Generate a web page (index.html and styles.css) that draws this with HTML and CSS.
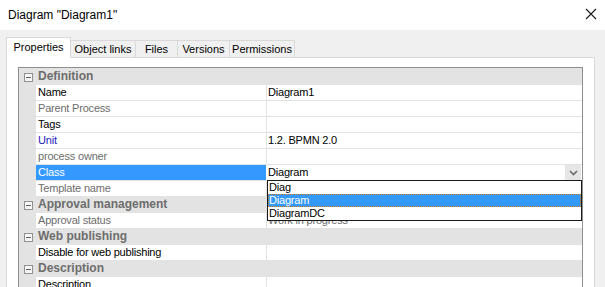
FILE: index.html
```html
<!DOCTYPE html>
<html>
<head>
<meta charset="utf-8">
<title>Diagram</title>
<link rel="stylesheet" href="styles.css">
</head>
<body>
<div class="titlebar">
  <span class="title">Diagram "Diagram1"</span>
  <svg class="close" width="12" height="12" viewBox="0 0 12 12"><path d="M1 1 L11 11 M11 1 L1 11" stroke="#1a1a1a" stroke-width="1.1" fill="none"/></svg>
</div>
<div class="dialog">
  <div class="tabs">
    <div class="tab active w-props">Properties</div>
    <div class="tab w-links">Object links</div>
    <div class="tab w-files">Files</div>
    <div class="tab w-versions">Versions</div>
    <div class="tab w-perms">Permissions</div>
  </div>
  <div class="panel">
    <div class="grid">
      <div class="row cat"><span class="gut"><span class="toggle"></span></span><span class="cat-label">Definition</span></div>
      <div class="row"><span class="gut"></span><span class="name">Name</span><span class="val">Diagram1</span></div>
      <div class="row"><span class="gut"></span><span class="name muted">Parent Process</span><span class="val"></span></div>
      <div class="row"><span class="gut"></span><span class="name">Tags</span><span class="val"></span></div>
      <div class="row"><span class="gut"></span><span class="name link">Unit</span><span class="val">1.2. BPMN 2.0</span></div>
      <div class="row"><span class="gut"></span><span class="name muted">process owner</span><span class="val"></span></div>
      <div class="row"><span class="gut"></span><span class="name selected">Class</span>
        <span class="val combo"><span class="combo-text">Diagram</span><span class="combo-btn"><svg width="9" height="6" viewBox="0 0 9 6"><path d="M1 1 L4.5 4.5 L8 1" stroke="#6a6a6a" stroke-width="1.6" fill="none"/></svg></span>
          <span class="dropdown">
            <span class="opt">Diag</span>
            <span class="opt hl">Diagram</span>
            <span class="opt">DiagramDC</span>
          </span>
        </span>
      </div>
      <div class="row"><span class="gut"></span><span class="name muted">Template name</span><span class="val"></span></div>
      <div class="row cat"><span class="gut"><span class="toggle"></span></span><span class="cat-label">Approval management</span></div>
      <div class="row"><span class="gut"></span><span class="name muted">Approval status</span><span class="val muted">Work in progress</span></div>
      <div class="row cat"><span class="gut"><span class="toggle"></span></span><span class="cat-label">Web publishing</span></div>
      <div class="row"><span class="gut"></span><span class="name">Disable for web publishing</span><span class="val"></span></div>
      <div class="row cat"><span class="gut"><span class="toggle"></span></span><span class="cat-label">Description</span></div>
      <div class="row"><span class="gut"></span><span class="name">Description</span><span class="val"></span></div>
    </div>
  </div>
</div>
</body>
</html>
```

FILE: styles.css
```css
* { box-sizing: border-box; }
html, body { margin: 0; padding: 0; }
body {
  width: 605px;
  height: 287px;
  overflow: hidden;
  background: #f0f0f0;
  font-family: "Liberation Sans", Arial, sans-serif;
  font-size: 11px;
  color: #000;
}
.titlebar {
  height: 30px;
  background: #fff;
  display: flex;
  align-items: center;
  justify-content: space-between;
  padding: 0 8px;
  font-size: 12px;
  line-height: 30px;
}
.close { display: block; margin-top: -2px; }
.dialog { padding: 7px 10px 0 6px; }
.tabs {
  display: flex;
  align-items: flex-end;
  height: 20px;
}
.tab {
  height: 17px;
  border: 1px solid #d9d9d9;
  border-bottom: none;
  margin-right: -1px;
  background: #f0f0f0;
  text-align: center;
  line-height: 16px;
  white-space: nowrap;
}
.tab.active {
  height: 21px;
  margin-bottom: -1px;
  background: #fff;
  line-height: 18px;
  position: relative;
  z-index: 1;
}
.w-props { width: 65px; }
.w-links { width: 66px; }
.w-files { width: 43px; }
.w-versions { width: 53px; }
.w-perms { width: 66px; }
.panel {
  background: #fff;
  border: 1px solid #d9d9d9;
  padding: 9px 11px 0 11px;
  height: 260px;
}
.grid {
  border: 1px solid #8e8e8e;
  background: #e3e3e3;
  padding-top: 1px;
  height: 240px;
  letter-spacing: -0.2px;
}
.row {
  display: grid;
  grid-template-columns: 17px 231px 315px;
  height: 16px;
}
.row.cat { grid-template-columns: 17px 546px; }
.gut { background: #e3e3e3; }
.name {
  background: #fff;
  border-right: 1px solid #e3e3e3;
  border-bottom: 1px solid #e3e3e3;
  padding-left: 2px;
  line-height: 15px;
  white-space: nowrap;
  overflow: hidden;
}
.val {
  background: #fff;
  border-bottom: 1px solid #e3e3e3;
  padding-left: 1px;
  line-height: 15px;
  white-space: nowrap;
}
.muted { color: #6d6d6d; }
.link { color: #1c1cc0; }
.name.selected {
  background: #3399ff;
  color: #fff;
  border-right-color: #fff;
}
.toggle {
  display: block;
  width: 9px;
  height: 9px;
  margin: 4px 0 0 5px;
  border: 1px solid #919191;
  background: #f6f6f6;
  position: relative;
}
.toggle::after {
  content: "";
  position: absolute;
  left: 1px;
  right: 1px;
  top: 3px;
  height: 1px;
  background: #5f5f5f;
}
.cat-label {
  padding-left: 2px;
  font-size: 12px;
  font-weight: bold;
  color: #6d6d6d;
  line-height: 14px;
  letter-spacing: 0;
  white-space: nowrap;
}
.combo {
  display: flex;
  position: relative;
}
.combo-text { flex: 1; }
.combo-btn {
  width: 16px;
  height: 15px;
  margin-right: 1px;
  background: #e6e6e6;
  display: flex;
  align-items: center;
  justify-content: center;
}
.combo-btn svg { display: block; }
.dropdown {
  position: absolute;
  top: 15px;
  left: 0;
  width: 315px;
  border: 1px solid #1a1a1a;
  background: #fff;
  z-index: 2;
  display: flex;
  flex-direction: column;
}
.opt {
  height: 13px;
  line-height: 13px;
  padding-left: 1px;
  color: #000;
}
.opt.hl {
  background: #3399ff;
  color: #fff;
  outline: 1px dotted #d97a1a;
  outline-offset: -1px;
}
```
